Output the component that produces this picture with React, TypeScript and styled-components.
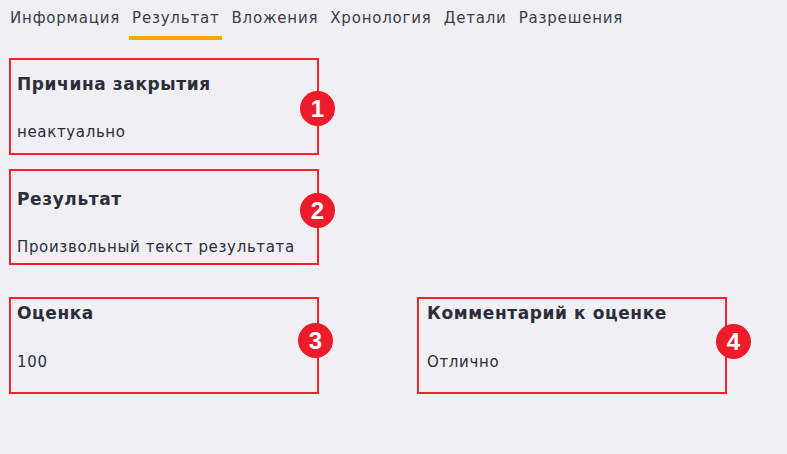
import React from 'react';
import styled, { createGlobalStyle } from 'styled-components';

const GlobalStyle = createGlobalStyle`
  html, body {
    margin: 0;
    padding: 0;
    background: #f0eff4;
  }
  body {
    font-family: 'DejaVu Sans', 'Noto Sans', sans-serif;
    color: #2b2d3a;
  }
`;

const Page = styled.div`
  width: 787px;
  height: 454px;
  box-sizing: border-box;
  padding: 5px 0 0 7px;
  background: #f0eff4;
  overflow: hidden;
`;

const Tabs = styled.nav`
  display: flex;
  gap: 6px;
  height: 35px;
`;

const Tab = styled.div<{ $active?: boolean }>`
  padding: 0 3px;
  font-size: 15px;
  line-height: 26px;
  color: #3a3c48;
  letter-spacing: 0.8px;
  height: 35px;
  box-sizing: border-box;
  white-space: nowrap;
  border-bottom: 4px solid ${(p) => (p.$active ? '#f7a80c' : 'transparent')};
`;

const Body = styled.div`
  display: flex;
  flex-direction: column;
  margin: 18px 0 0 2px;
`;

const Row = styled.div`
  display: flex;
  gap: 98px;
`;

// annotation frame round a field; offsets differ a bit since they're hand drawn
const Frame = styled.div<{ $top: number; $gapAfter?: number; $pl?: number; $h?: number }>`
  position: relative;
  width: 310px;
  height: ${(p) => p.$h ?? 97}px;
  box-sizing: border-box;
  border: 2px solid #f2222f;
  padding: ${(p) => p.$top}px 0 0 ${(p) => p.$pl ?? 6}px;
  margin-bottom: ${(p) => p.$gapAfter ?? 0}px;
`;

const Title = styled.div<{ $gap?: number }>`
  font-size: 17px;
  font-weight: 700;
  line-height: 22px;
  letter-spacing: 0.6px;
  color: #2b2d3a;
  margin-bottom: ${(p) => p.$gap ?? 27}px;
  white-space: nowrap;
`;

const Value = styled.div`
  font-size: 15px;
  line-height: 20px;
  letter-spacing: 0.65px;
  color: #2b2d3a;
  white-space: nowrap;
`;

const Badge = styled.div<{ $top: number; $right: number }>`
  position: absolute;
  top: ${(p) => p.$top}px;
  right: ${(p) => p.$right}px;
  width: 35px;
  height: 35px;
  border-radius: 50%;
  background: #ee1b2b;
  color: #fff;
  font-family: 'Liberation Sans', 'Roboto', sans-serif;
  font-weight: 700;
  font-size: 24px;
  display: flex;
  align-items: center;
  justify-content: center;
`;

const tabs = ['Информация', 'Результат', 'Вложения', 'Хронология', 'Детали', 'Разрешения'];

export default function App() {
  return (
    <>
      <GlobalStyle />
      <Page>
        <Tabs>
          {tabs.map((t) => (
            <Tab key={t} $active={t === 'Результат'}>
              {t}
            </Tab>
          ))}
        </Tabs>
        <Body>
          <Frame $top={13} $gapAfter={14}>
            <Title>Причина закрытия</Title>
            <Value>неактуально</Value>
            <Badge $top={31} $right={-18}>1</Badge>
          </Frame>
          <Frame $top={17} $gapAfter={32} $h={96}>
            <Title>Результат</Title>
            <Value>Произвольный текст результата</Value>
            <Badge $top={22} $right={-18}>2</Badge>
          </Frame>
          <Row>
            <Frame $top={3}>
              <Title $gap={28}>Оценка</Title>
              <Value>100</Value>
              <Badge $top={24} $right={-16}>3</Badge>
            </Frame>
            <Frame $top={3} $pl={8}>
              <Title $gap={28}>Комментарий к оценке</Title>
              <Value>Отлично</Value>
              <Badge $top={25} $right={-26}>4</Badge>
            </Frame>
          </Row>
        </Body>
      </Page>
    </>
  );
}
